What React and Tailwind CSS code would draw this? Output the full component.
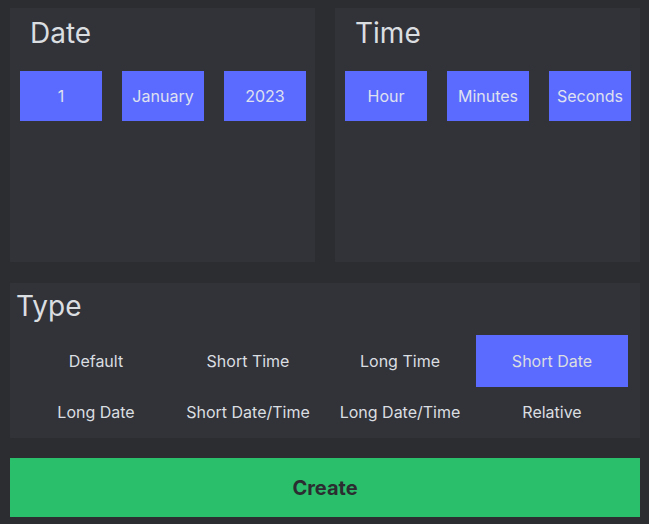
import React, { useState } from 'react';

const font = { fontFamily: 'Inter, "Noto Sans", sans-serif' };

const FieldButton = ({ label }) => (
  <button className="w-[82px] h-[50px] bg-[#5c6bff] text-[#dfe1f0] text-[16px]">{label}</button>
);

const Panel = ({ title, items, titleClass }) => (
  <div className="w-[305px] h-[254px] bg-[#313338] pl-[10px] pr-[9px]">
    <h2 className={`text-[28px] leading-[34px] text-[#dbdee1] mt-[8px] ${titleClass}`}>{title}</h2>
    <div className="flex justify-between mt-[21px]">
      {items.map((item) => (
        <FieldButton key={item} label={item} />
      ))}
    </div>
  </div>
);

const types = [
  'Default',
  'Short Time',
  'Long Time',
  'Short Date',
  'Long Date',
  'Short Date/Time',
  'Long Date/Time',
  'Relative',
];

const App = () => {
  const [selected, setSelected] = useState('Short Date');

  return (
    <div className="min-h-screen bg-[#2b2d31] pt-[8px] pl-[10px] pr-[9px] pb-[7px]" style={font}>
      <div className="flex gap-[20px]">
        <Panel title="Date" items={['1', 'January', '2023']} titleClass="ml-[10px]" />
        <Panel title="Time" items={['Hour', 'Minutes', 'Seconds']} titleClass="ml-[10px]" />
      </div>

      <div className="mt-[21px] h-[155px] bg-[#313338] pl-[10px] pr-[12px]">
        <h2 className="text-[28px] leading-[34px] text-[#dbdee1] pt-[6px] ml-[-4px]">Type</h2>
        <div className="grid grid-cols-4 mt-[12px]">
          {types.map((type, i) => (
            <button
              key={type}
              onClick={() => setSelected(type)}
              className={`text-[16px] text-[#dbdee1] ${i < 4 ? 'h-[52px]' : 'h-[50px]'} ${
                selected === type ? 'bg-[#5c6bff]' : ''
              }`}
            >
              {type}
            </button>
          ))}
        </div>
      </div>

      <button className="mt-[20px] w-[630px] h-[59px] bg-[#2ac06b] text-[#2b2d31] text-[20px] font-bold">
        Create
      </button>
    </div>
  );
};

export default App;
